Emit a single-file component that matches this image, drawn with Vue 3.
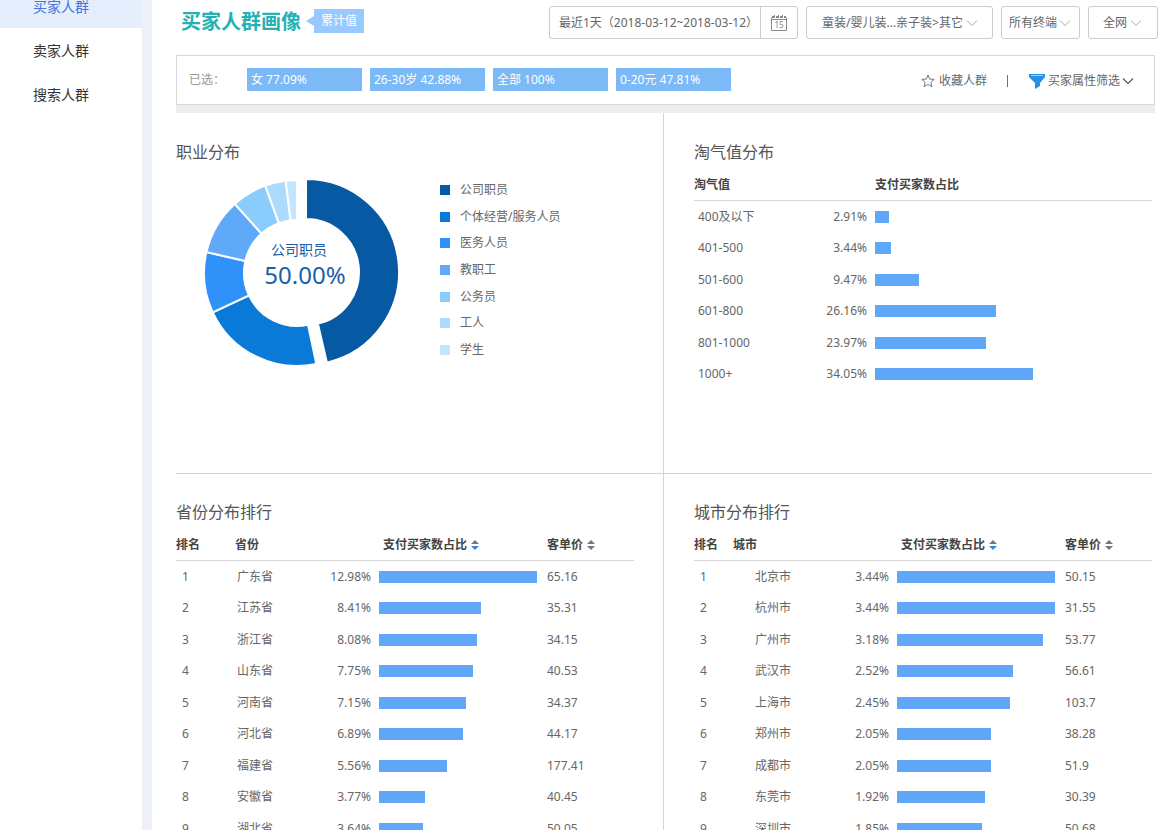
<script setup>
import { ref } from 'vue'

const menu = ['买家人群', '卖家人群', '搜索人群']
const active = ref(0)

const dateRange = ref('最近1天（2018-03-12~2018-03-12）')
const selects = [
  { id: 'category', label: '类目', value: '童装/婴儿装...亲子装>其它' },
  { id: 'terminal', label: '终端', value: '所有终端' },
  { id: 'channel', label: '渠道', value: '全网' },
]

const tags = ['女 77.09%', '26-30岁 42.88%', '全部 100%', '0-20元 47.81%']

const jobs = [
  { name: '公司职员', color: '#0659a2', from: 0, to: 167, cx: 102, cy: 94 },
  { name: '个体经营/服务人员', color: '#0a7ad9', from: 168, to: 245, cx: 93, cy: 95 },
  { name: '医务人员', color: '#3092f8', from: 245, to: 283, cx: 93, cy: 95 },
  { name: '教职工', color: '#60a9f9', from: 283, to: 318, cx: 93, cy: 95 },
  { name: '公务员', color: '#8accfb', from: 318, to: 340, cx: 93, cy: 95 },
  { name: '工人', color: '#abdcfd', from: 340, to: 353, cx: 93, cy: 95 },
  { name: '学生', color: '#c3e6fe', from: 353, to: 360, cx: 93, cy: 95 },
]

const OUTER = 93
const INNER = 53

function point(job, radius, degrees) {
  const a = (degrees * Math.PI) / 180
  return `${(job.cx + radius * Math.sin(a)).toFixed(2)} ${(job.cy - radius * Math.cos(a)).toFixed(2)}`
}

function slice(job) {
  return [
    `M${point(job, OUTER, job.from)}`,
    `A${OUTER} ${OUTER} 0 0 1 ${point(job, OUTER, job.to)}`,
    `L${point(job, INNER, job.to)}`,
    `A${INNER} ${INNER} 0 0 0 ${point(job, INNER, job.from)}Z`,
  ].join('')
}

const scores = [
  ['400及以下', 2.91],
  ['401-500', 3.44],
  ['501-600', 9.47],
  ['601-800', 26.16],
  ['801-1000', 23.97],
  ['1000+', 34.05],
]

const rankings = [
  {
    key: 'province',
    title: '省份分布排行',
    column: '省份',
    rows: [
      ['广东省', 12.98, '65.16'],
      ['江苏省', 8.41, '35.31'],
      ['浙江省', 8.08, '34.15'],
      ['山东省', 7.75, '40.53'],
      ['河南省', 7.15, '34.37'],
      ['河北省', 6.89, '44.17'],
      ['福建省', 5.56, '177.41'],
      ['安徽省', 3.77, '40.45'],
      ['湖北省', 3.64, '50.05'],
    ],
  },
  {
    key: 'city',
    title: '城市分布排行',
    column: '城市',
    rows: [
      ['北京市', 3.44, '50.15'],
      ['杭州市', 3.44, '31.55'],
      ['广州市', 3.18, '53.77'],
      ['武汉市', 2.52, '56.61'],
      ['上海市', 2.45, '103.7'],
      ['郑州市', 2.05, '38.28'],
      ['成都市', 2.05, '51.9'],
      ['东莞市', 1.92, '30.39'],
      ['深圳市', 1.85, '50.68'],
    ],
  },
]

function barWidth(rows, value) {
  const max = Math.max(...rows.map((r) => r[1]))
  return { width: `${(value / max) * 100}%` }
}
</script>

<template>
  <div class="page">
    <aside class="sidebar">
      <nav class="menu">
        <a
          v-for="(item, i) in menu"
          :key="item"
          href="#"
          class="menu-item"
          :class="{ active: active === i }"
          @click.prevent="active = i"
        >{{ item }}</a>
      </nav>
    </aside>

    <main class="main">
      <header class="header">
        <h1 class="title">买家人群画像</h1>
        <span class="badge">累计值</span>
        <div class="controls">
          <div class="date">
            <input v-model="dateRange" class="date-input" type="text" aria-label="日期范围" readonly>
            <button class="date-button" type="button" aria-label="选择日期">
              <svg width="18" height="18" viewBox="0 0 18 18" fill="none" stroke="#8a8a8a">
                <path d="M1.500 3.500V16.500H16.500V3.500M1 5.500H17" />
                <path d="M2 3H4M6 3H8M10 3H12M14 3H16" stroke-width="2" />
                <path d="M4.500 1V4M8.500 1V4M12.500 1V4" />
                <text x="9" y="14" text-anchor="middle" class="date-day">15</text>
              </svg>
            </button>
          </div>
          <div v-for="s in selects" :key="s.id" class="select" :class="s.id">
            <select :id="s.id" :aria-label="s.label">
              <option>{{ s.value }}</option>
            </select>
            <svg class="select-arrow" width="12" height="8" viewBox="0 0 12 8" fill="none" stroke="#aaa">
              <path d="M1 1.500L6 6.500L11 1.500" />
            </svg>
          </div>
        </div>
      </header>

      <section class="filter">
        <span class="filter-label">已选：</span>
        <ul class="tags">
          <li v-for="t in tags" :key="t" class="tag">{{ t }}</li>
        </ul>
        <div class="filter-actions">
          <button type="button" class="action">
            <svg class="star" width="14" height="14" viewBox="0 0 14 14" fill="none" stroke="#777" stroke-linejoin="round">
              <path d="M7 1L8.700 5.100L13.200 5.400L9.800 8.300L10.900 12.800L7 10.400L3.100 12.800L4.200 8.300L0.800 5.400L5.300 5.100Z" />
            </svg>
            收藏人群
          </button>
          <span class="separator"></span>
          <button type="button" class="action">
            <svg class="funnel" width="16" height="16" viewBox="0 0 16 16">
              <path d="M0 1H16V4L11 10V13L6 16V10L0 4Z" fill="#2490e6" />
              <path d="M2 2.500H14" stroke="#9fd0fa" />
            </svg>
            买家属性筛选
            <svg class="chevron" width="12" height="8" viewBox="0 0 12 8" fill="none" stroke="#555">
              <path d="M1 1.500L6 6.500L11 1.500" stroke-width="1.200" />
            </svg>
          </button>
        </div>
      </section>

      <div class="panels">
        <section class="panel">
          <h2 class="panel-title">职业分布</h2>
          <div class="jobs">
            <svg class="donut" width="200" height="190" viewBox="0 0 200 190" role="img" aria-label="职业分布">
              <path v-for="j in jobs" :key="j.name" :d="slice(j)" :fill="j.color" stroke="#fff" stroke-width="2" />
              <text x="95" y="77" text-anchor="middle" class="donut-name">公司职员</text>
              <text x="101" y="106" text-anchor="middle" class="donut-value">50.00%</text>
            </svg>
            <ul class="legend">
              <li v-for="j in jobs" :key="j.name">
                <svg width="10" height="10" viewBox="0 0 10 10"><rect width="10" height="10" :fill="j.color" /></svg>
                {{ j.name }}
              </li>
            </ul>
          </div>
        </section>

        <section class="panel">
          <h2 class="panel-title">淘气值分布</h2>
          <table class="table score">
            <thead>
              <tr>
                <th class="col-label">淘气值</th>
                <th class="share-head">支付买家数占比</th>
              </tr>
            </thead>
            <tbody>
              <tr v-for="r in scores" :key="r[0]">
                <td class="label">{{ r[0] }}</td>
                <td>
                  <div class="share">
                    <span class="percent">{{ r[1].toFixed(2) }}%</span>
                    <span class="track"><span class="bar" :style="barWidth(scores, r[1])"></span></span>
                  </div>
                </td>
              </tr>
            </tbody>
          </table>
        </section>

        <section v-for="rank in rankings" :key="rank.key" class="panel">
          <h2 class="panel-title">{{ rank.title }}</h2>
          <table class="table" :class="rank.key">
            <thead>
              <tr>
                <th class="col-rank">排名</th>
                <th class="col-name">{{ rank.column }}</th>
                <th class="col-share share-head">
                  <button type="button" class="sort">
                    支付买家数占比
                    <svg width="8" height="10" viewBox="0 0 8 10">
                      <path d="M4 0L8 4H0Z" fill="#777" />
                      <path d="M0 6H8L4 10Z" fill="#2b8ae8" />
                    </svg>
                  </button>
                </th>
                <th>
                  <button type="button" class="sort">
                    客单价
                    <svg width="8" height="10" viewBox="0 0 8 10">
                      <path d="M4 0L8 4H0ZM0 6H8L4 10Z" fill="#777" />
                    </svg>
                  </button>
                </th>
              </tr>
            </thead>
            <tbody>
              <tr v-for="(r, i) in rank.rows" :key="r[0]">
                <td class="rank">{{ i + 1 }}</td>
                <td class="name">{{ r[0] }}</td>
                <td>
                  <div class="share">
                    <span class="percent">{{ r[1].toFixed(2) }}%</span>
                    <span class="track"><span class="bar" :style="barWidth(rank.rows, r[1])"></span></span>
                  </div>
                </td>
                <td>{{ r[2] }}</td>
              </tr>
            </tbody>
          </table>
        </section>
      </div>
    </main>
  </div>
</template>

<style>
body {
  margin: 0;
  background: #fff;
}
</style>

<style scoped>
.page {
  display: flex;
  height: 100vh;
  overflow: hidden;
  background: #fff;
  color: #666;
  font-family: "Noto Sans", "Noto Sans CJK SC", sans-serif;
  font-size: 12px;
  line-height: 20px;
}

.page *,
.page {
  box-sizing: border-box;
}

button,
input,
select {
  margin: 0;
  padding: 0;
  border: 0;
  background: none;
  color: inherit;
  font: inherit;
}

ul {
  margin: 0;
  padding: 0;
  list-style: none;
}

.sidebar {
  flex: none;
  width: 152px;
  border-right: 10px solid #edf0f4;
}

.menu {
  display: flex;
  flex-direction: column;
  margin-top: -16px;
}

.menu-item {
  height: 44px;
  padding-left: 33px;
  color: #333;
  font-size: 14px;
  line-height: 46px;
  text-decoration: none;
}

.menu-item.active {
  background: #e4eefd;
  color: #4373e0;
}

.main {
  flex: 1;
  min-width: 0;
  padding-left: 24px;
}

.header {
  display: flex;
  align-items: flex-start;
  padding: 6px 10px 16px 5px;
}

.title {
  margin: 0;
  color: #25b1b4;
  font-size: 20px;
  font-weight: 700;
  line-height: 32px;
}

.badge {
  position: relative;
  width: 50px;
  margin: 3px 0 0 13px;
  background: #98caff;
  color: #fff;
  line-height: 24px;
  text-align: center;
}

.badge::before {
  content: "";
  position: absolute;
  top: 7px;
  left: -8px;
  border: 5px solid transparent;
  border-right: 8px solid #98caff;
  border-left: 0;
}

.controls {
  display: flex;
  gap: 8px;
  margin-left: auto;
}

.date,
.select {
  position: relative;
  display: flex;
  height: 33px;
  border: 1px solid #ccc;
  border-radius: 3px;
}

.date {
  width: 249px;
}

.date-input {
  flex: 1;
  min-width: 0;
  padding-left: 9px;
}

.date-button {
  display: flex;
  align-items: center;
  justify-content: center;
  width: 37px;
  border-left: 1px solid #ccc;
}

.date-day {
  fill: #888;
  stroke: none;
  font-size: 8px;
}

.select select {
  width: 100%;
  appearance: none;
}

.select-arrow {
  position: absolute;
  top: 12px;
  pointer-events: none;
}

.category {
  width: 187px;
}

.category select {
  padding-left: 15px;
}

.category .select-arrow {
  right: 14px;
}

.terminal {
  width: 79px;
}

.terminal select {
  padding-left: 7px;
}

.terminal .select-arrow {
  right: 8px;
}

.channel {
  width: 70px;
}

.channel select {
  padding-left: 14px;
}

.channel .select-arrow {
  right: 15px;
}

.filter {
  display: flex;
  align-items: center;
  height: 50px;
  margin-right: 13px;
  padding: 0 20px 0 12px;
  border: 1px solid #d8d8d8;
  box-shadow: 0 8px 0 #eee;
}

.filter-label {
  width: 58px;
  color: #999;
}

.tags {
  display: flex;
  gap: 8px;
  margin-bottom: 2px;
}

.tag {
  width: 115px;
  padding-left: 4px;
  background: #7bb9f7;
  color: #fff;
  line-height: 23px;
}

.filter-actions {
  display: flex;
  align-items: center;
  margin-left: auto;
  padding-top: 2px;
}

.action {
  display: flex;
  align-items: center;
}

.star {
  margin-right: 4px;
}

.separator {
  width: 1px;
  height: 12px;
  margin: 0 21px 0 20px;
  background: #6b6b9c;
}

.funnel {
  margin-right: 3px;
}

.chevron {
  margin-left: 2px;
}

.panels {
  display: grid;
  grid-template-columns: 1fr 1fr;
  margin: 8px 16px 0 0;
}

.panel {
  min-height: 360px;
  padding: 27px 0 0 30px;
}

.panel:nth-child(odd) {
  padding: 27px 29px 0 0;
  border-right: 1px solid #d4d4d4;
}

.panel:nth-child(n + 3) {
  padding-top: 26px;
  border-top: 1px solid #d4d4d4;
}

.panel-title {
  margin: 0 0 5px;
  color: #555;
  font-size: 16px;
  font-weight: 400;
  line-height: 24px;
}

.jobs {
  display: flex;
  align-items: flex-start;
  padding: 9px 0 0 28px;
}

.donut {
  flex: none;
}

.donut-name {
  fill: #1b5ea8;
  font-size: 14px;
}

.donut-value {
  fill: #1b5ea8;
  font-size: 24px;
}

.legend {
  display: flex;
  flex-direction: column;
  justify-content: space-between;
  height: 180px;
  margin: 2px 0 0 36px;
}

.legend li {
  display: flex;
  align-items: center;
  gap: 10px;
}

.table {
  width: 100%;
  border-spacing: 0;
  table-layout: fixed;
}

.table th {
  height: 32px;
  padding: 0;
  border-bottom: 1px solid #d8d8d8;
  color: #444;
  font-weight: 700;
  text-align: left;
}

.table td {
  height: 31px;
  padding: 0;
}

.table tr:nth-child(even) td {
  height: 32px;
}

.col-label {
  width: 121px;
}

.col-rank {
  width: 59px;
}

.col-name {
  width: 84px;
}

.city .col-rank {
  width: 39px;
}

.city .col-name {
  width: 104px;
}

.col-share {
  width: 228px;
}

.table .share-head {
  padding-left: 64px;
}

.score .share-head {
  padding-left: 60px;
}

.table .label {
  padding-left: 4px;
}

.table .rank {
  padding-left: 6px;
}

.table .name {
  padding-left: 2px;
}

.city .name {
  padding-left: 22px;
}

.sort {
  display: flex;
  align-items: center;
  gap: 4px;
}

.share {
  display: flex;
  align-items: center;
  gap: 8px;
}

.percent {
  width: 52px;
  text-align: right;
}

.track {
  width: 158px;
}

.bar {
  display: block;
  height: 12px;
  background: #5fa8f8;
}
</style>
